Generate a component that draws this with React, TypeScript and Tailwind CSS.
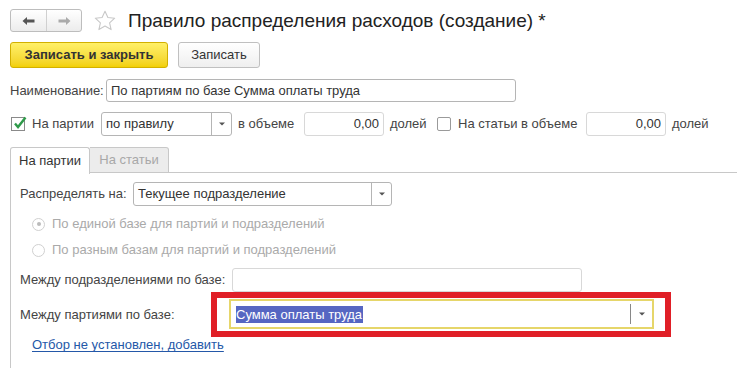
import React from "react";

const Arrow = () => (
  <svg width="8" height="6" viewBox="0 0 8 6"><path d="M1 1.5h6L4 4.5z" fill="#555" /></svg>
);

function Input({ w, value, right, light }: { w: string; value?: string; right?: boolean; light?: boolean }) {
  return (
    <div
      className={`${w} h-full rounded-[3px] border ${light ? "border-[#d8d8d8]" : "border-[#b5b5b5]"} bg-white flex items-center px-[4px] text-[13px] text-[#333] ${right ? "justify-end" : ""}`}
    >
      {value}
    </div>
  );
}

function Select({ w, value }: { w: string; value: string }) {
  return (
    <div className={`${w} h-full rounded-[3px] border border-[#b5b5b5] bg-white flex items-stretch text-[13px] text-[#333]`}>
      <div className="flex-1 flex items-center px-[4px] whitespace-nowrap">{value}</div>
      <div className="w-[20px] border-l border-[#b5b5b5] flex items-center justify-center">
        <Arrow />
      </div>
    </div>
  );
}

function Radio({ checked }: { checked?: boolean }) {
  return (
    <div className="w-[13px] h-[13px] rounded-full border border-[#d0d0d0] bg-white flex items-center justify-center">
      {checked && <div className="w-[4px] h-[4px] rounded-full bg-[#bbb]" />}
    </div>
  );
}

export default function App() {
  return (
    <div
      className="w-[741px] h-[368px] bg-white overflow-hidden text-[#444] text-[13px]"
      style={{ fontFamily: '"Liberation Sans", Arial, sans-serif' }}
    >
      {/* Title row */}
      <div className="flex items-center pt-[9px] pl-[10px] h-[32px]">
        <div className="shrink-0 flex h-[23px] w-[72px] rounded-[3px] border border-[#bdbdbd] bg-gradient-to-b from-white to-[#ececec]">
          <div className="w-[36px] flex items-center justify-center border-r border-[#d0d0d0]">
            <svg width="13" height="10" viewBox="0 0 13 10">
              <path d="M0.5 5L5 1v2.6h7.5v2.8H5V9z" fill="#555" />
            </svg>
          </div>
          <div className="flex-1 flex items-center justify-center">
            <svg width="13" height="10" viewBox="0 0 13 10">
              <path d="M12.5 5L8 1v2.6H0.5v2.8H8V9z" fill="#aaa" />
            </svg>
          </div>
        </div>
        <div className="shrink-0 ml-[12px] w-[22px] h-[21px] flex">
          <svg width="22" height="21" viewBox="0 0 22 21">
            <path
              d="M11 1.2l2.9 6.3 6.8.7-5.1 4.6 1.5 6.8L11 16.1l-6.1 3.5 1.5-6.8L1.3 8.2l6.8-.7z"
              fill="none"
              stroke="#c8c8c8"
              strokeWidth="1.1"
              strokeLinejoin="round"
            />
          </svg>
        </div>
        <div className="shrink-0 ml-[12px] text-[19px] text-[#222] leading-none whitespace-nowrap">
          Правило распределения расходов (создание) *
        </div>
      </div>

      {/* Buttons */}
      <div className="flex items-center mt-[10px] pl-[10px] h-[26px] gap-[10px]">
        <div className="w-[158px] h-full rounded-[3px] border border-[#d2b000] bg-gradient-to-b from-[#fff066] to-[#f2d000] flex items-center justify-center font-bold text-[13px] text-[#333]">
          Записать и закрыть
        </div>
        <div className="w-[82px] h-full rounded-[3px] border border-[#c0c0c0] bg-gradient-to-b from-white to-[#efefef] flex items-center justify-center text-[13px] text-[#333]">
          Записать
        </div>
      </div>

      {/* Name */}
      <div className="flex items-center mt-[11px] pl-[10px] h-[23px]">
        <div className="w-[96px] whitespace-nowrap">Наименование:</div>
        <Input w="w-[410px]" value="По партиям по базе Сумма оплаты труда" />
      </div>

      {/* Checkbox row */}
      <div className="flex items-center mt-[10px] pl-[11px] h-[24px] whitespace-nowrap">
        <div className="w-[14px] h-[14px] border border-[#8a8a8a] bg-white relative">
          <svg className="absolute left-[1px] -top-[2px]" width="14" height="14" viewBox="0 0 14 14">
            <path d="M2 7.5l3 3.5L12.5 1.5" fill="none" stroke="#2f9a4a" strokeWidth="2.4" />
          </svg>
        </div>
        <div className="ml-[7px] w-[69px]">На партии</div>
        <Select w="w-[131px]" value="по правилу" />
        <div className="ml-[6px] w-[66px]">в объеме</div>
        <Input w="w-[80px]" value="0,00" right light />
        <div className="ml-[6px] w-[47px]">долей</div>
        <div className="w-[14px] h-[14px] border border-[#9a9a9a] rounded-[2px] bg-white" />
        <div className="ml-[7px] w-[128px]">На статьи в объеме</div>
        <Input w="w-[80px]" value="0,00" right light />
        <div className="ml-[6px]">долей</div>
      </div>

      {/* Tabs */}
      <div className="flex mt-[10px] ml-[10px] h-[27px] items-end">
        <div className="w-[80px] h-[27px] border border-b-0 border-[#c8c8c8] rounded-t-[3px] bg-white flex items-center justify-center text-[#333] relative top-[1px]">
          На партии
        </div>
        <div className="w-[79px] h-[26px] border border-l-0 border-[#c8c8c8] bg-[#ececec] rounded-tr-[3px] flex items-center justify-center text-[#a8a8a8]">
          На статьи
        </div>
        <div className="flex-1 mr-[4px] border-b border-[#c8c8c8]" />
      </div>

      {/* Panel */}
      <div className="ml-[10px] border-l border-[#c8c8c8] h-[200px] pl-[9px]">
        <div className="flex items-center pt-[9px] h-[33px]">
          <div className="w-[113px] whitespace-nowrap">Распределять на:</div>
          <Select w="w-[259px]" value="Текущее подразделение" />
        </div>
        <div className="flex items-center mt-[8px] h-[20px] pl-[12px] text-[#aaa] whitespace-nowrap">
          <Radio checked />
          <div className="ml-[7px]">По единой базе для партий и подразделений</div>
        </div>
        <div className="flex items-center mt-[6px] h-[20px] pl-[12px] text-[#aaa] whitespace-nowrap">
          <Radio />
          <div className="ml-[7px]">По разным базам для партий и подразделений</div>
        </div>
        <div className="flex items-center mt-[8px] h-[24px]">
          <div className="w-[212px] whitespace-nowrap">Между подразделениями по базе:</div>
          <Input w="w-[350px]" light />
        </div>
        <div className="flex items-center h-[45px]">
          <div className="w-[191px] whitespace-nowrap">Между партиями по базе:</div>
          <div className="w-[460px] h-[45px] border-[6px] border-[#e01f27] bg-white pl-[12px] pt-[1px]">
            <div className="w-[425px] h-[30px] border-2 border-[#e6d66a] bg-white flex items-stretch">
              <div className="flex-1 flex items-center pl-[5px]">
                <span className="bg-[#5666c2] text-white text-[13px] leading-[17px] pr-[1px]">Сумма оплаты труда</span>
              </div>
              <div className="w-[22px] my-[3px] border-l border-[#888] flex items-center justify-center">
                <Arrow />
              </div>
            </div>
          </div>
        </div>
        <div className="pl-[12px] h-[16px] flex items-center">
          <span className="text-[#2458a8] underline underline-offset-2">Отбор не установлен, добавить</span>
        </div>
      </div>
    </div>
  );
}
